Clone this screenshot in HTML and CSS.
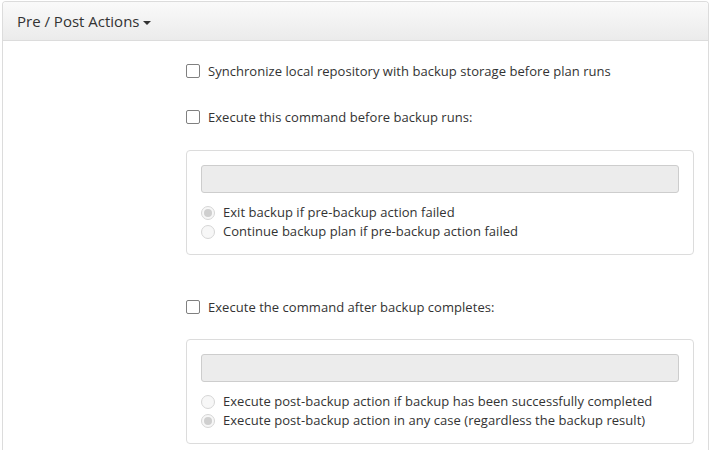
FILE: index.html
```html
<!DOCTYPE html>
<html>
<head>
<meta charset="utf-8">
<link rel="stylesheet" href="styles.css">
</head>
<body>
<div class="panel">
  <div class="panel-heading">Pre / Post Actions <span class="caret"></span></div>
  <div class="panel-body">
    <label class="check-row row1"><span class="checkbox"></span>Synchronize local repository with backup storage before plan runs</label>
    <label class="check-row row2"><span class="checkbox"></span>Execute this command before backup runs:</label>
    <div class="well">
      <div class="input"></div>
      <div class="radios">
        <div class="radio-row"><span class="radio checked"></span>Exit backup if pre-backup action failed</div>
        <div class="radio-row"><span class="radio"></span>Continue backup plan if pre-backup action failed</div>
      </div>
    </div>
    <label class="check-row row3"><span class="checkbox"></span>Execute the command after backup completes:</label>
    <div class="well">
      <div class="input"></div>
      <div class="radios">
        <div class="radio-row"><span class="radio"></span>Execute post-backup action if backup has been successfully completed</div>
        <div class="radio-row"><span class="radio checked"></span>Execute post-backup action in any case (regardless the backup result)</div>
      </div>
    </div>
  </div>
</div>
</body>
</html>
```
FILE: styles.css
```css
html, body {
  margin: 0;
  padding: 0;
  background: #fff;
}
body {
  font-family: "Open Sans", "Liberation Sans", sans-serif;
  color: #333;
  font-size: 13px;
  padding: 1px 0 0 2px;
}
.panel {
  border: 1px solid #dcdcdc;
  border-bottom: none;
  border-radius: 4px 4px 0 0;
  height: 460px;
  box-sizing: border-box;
  width: 707px;
}
.panel-heading {
  height: 39px;
  box-sizing: border-box;
  border-bottom: 1px solid #dcdcdc;
  background: linear-gradient(#fafafa, #ebebeb);
  border-radius: 3px 3px 0 0;
  padding: 9px 0 0 14px;
  font-size: 15px;
  line-height: 20px;
  color: #333;
}
.caret {
  display: inline-block;
  width: 0;
  height: 0;
  border-left: 4px solid transparent;
  border-right: 4px solid transparent;
  border-top: 4px solid #333;
  vertical-align: middle;
  margin-left: 0;
}
.panel-body {
  padding: 20px 14px 0 183px;
  display: flex;
  flex-direction: column;
  letter-spacing: 0.04px;
}
.check-row {
  display: flex;
  align-items: center;
  height: 20px;
  line-height: 20px;
}
.row2 { margin-top: 26px; }
.row3 { margin-top: 42px; }
.checkbox {
  width: 12px;
  height: 12px;
  border: 1px solid #808080;
  border-radius: 2px;
  margin-right: 8px;
  background: #fff;
  flex: none;
}
.well {
  margin-top: 23px;
  border: 1px solid #dcdcdc;
  border-radius: 4px;
  padding: 14px 14px 13px 14px;
}
.row3 + .well { margin-top: 22px; }
.input {
  height: 26px;
  background: #ececec;
  border: 1px solid #cdcdcd;
  border-radius: 3px;
}
.radios {
  margin-top: 10px;
}
.radio-row {
  display: flex;
  align-items: center;
  height: 19px;
  line-height: 19px;
}
.radio {
  width: 14px;
  height: 14px;
  box-sizing: border-box;
  border: 1px solid #d6d6d6;
  border-radius: 50%;
  background: #f7f7f7;
  margin-right: 8px;
  flex: none;
  display: flex;
  align-items: center;
  justify-content: center;
}
.radio.checked::after {
  content: "";
  width: 8px;
  height: 8px;
  border-radius: 50%;
  background: #cfcfcf;
}
```
